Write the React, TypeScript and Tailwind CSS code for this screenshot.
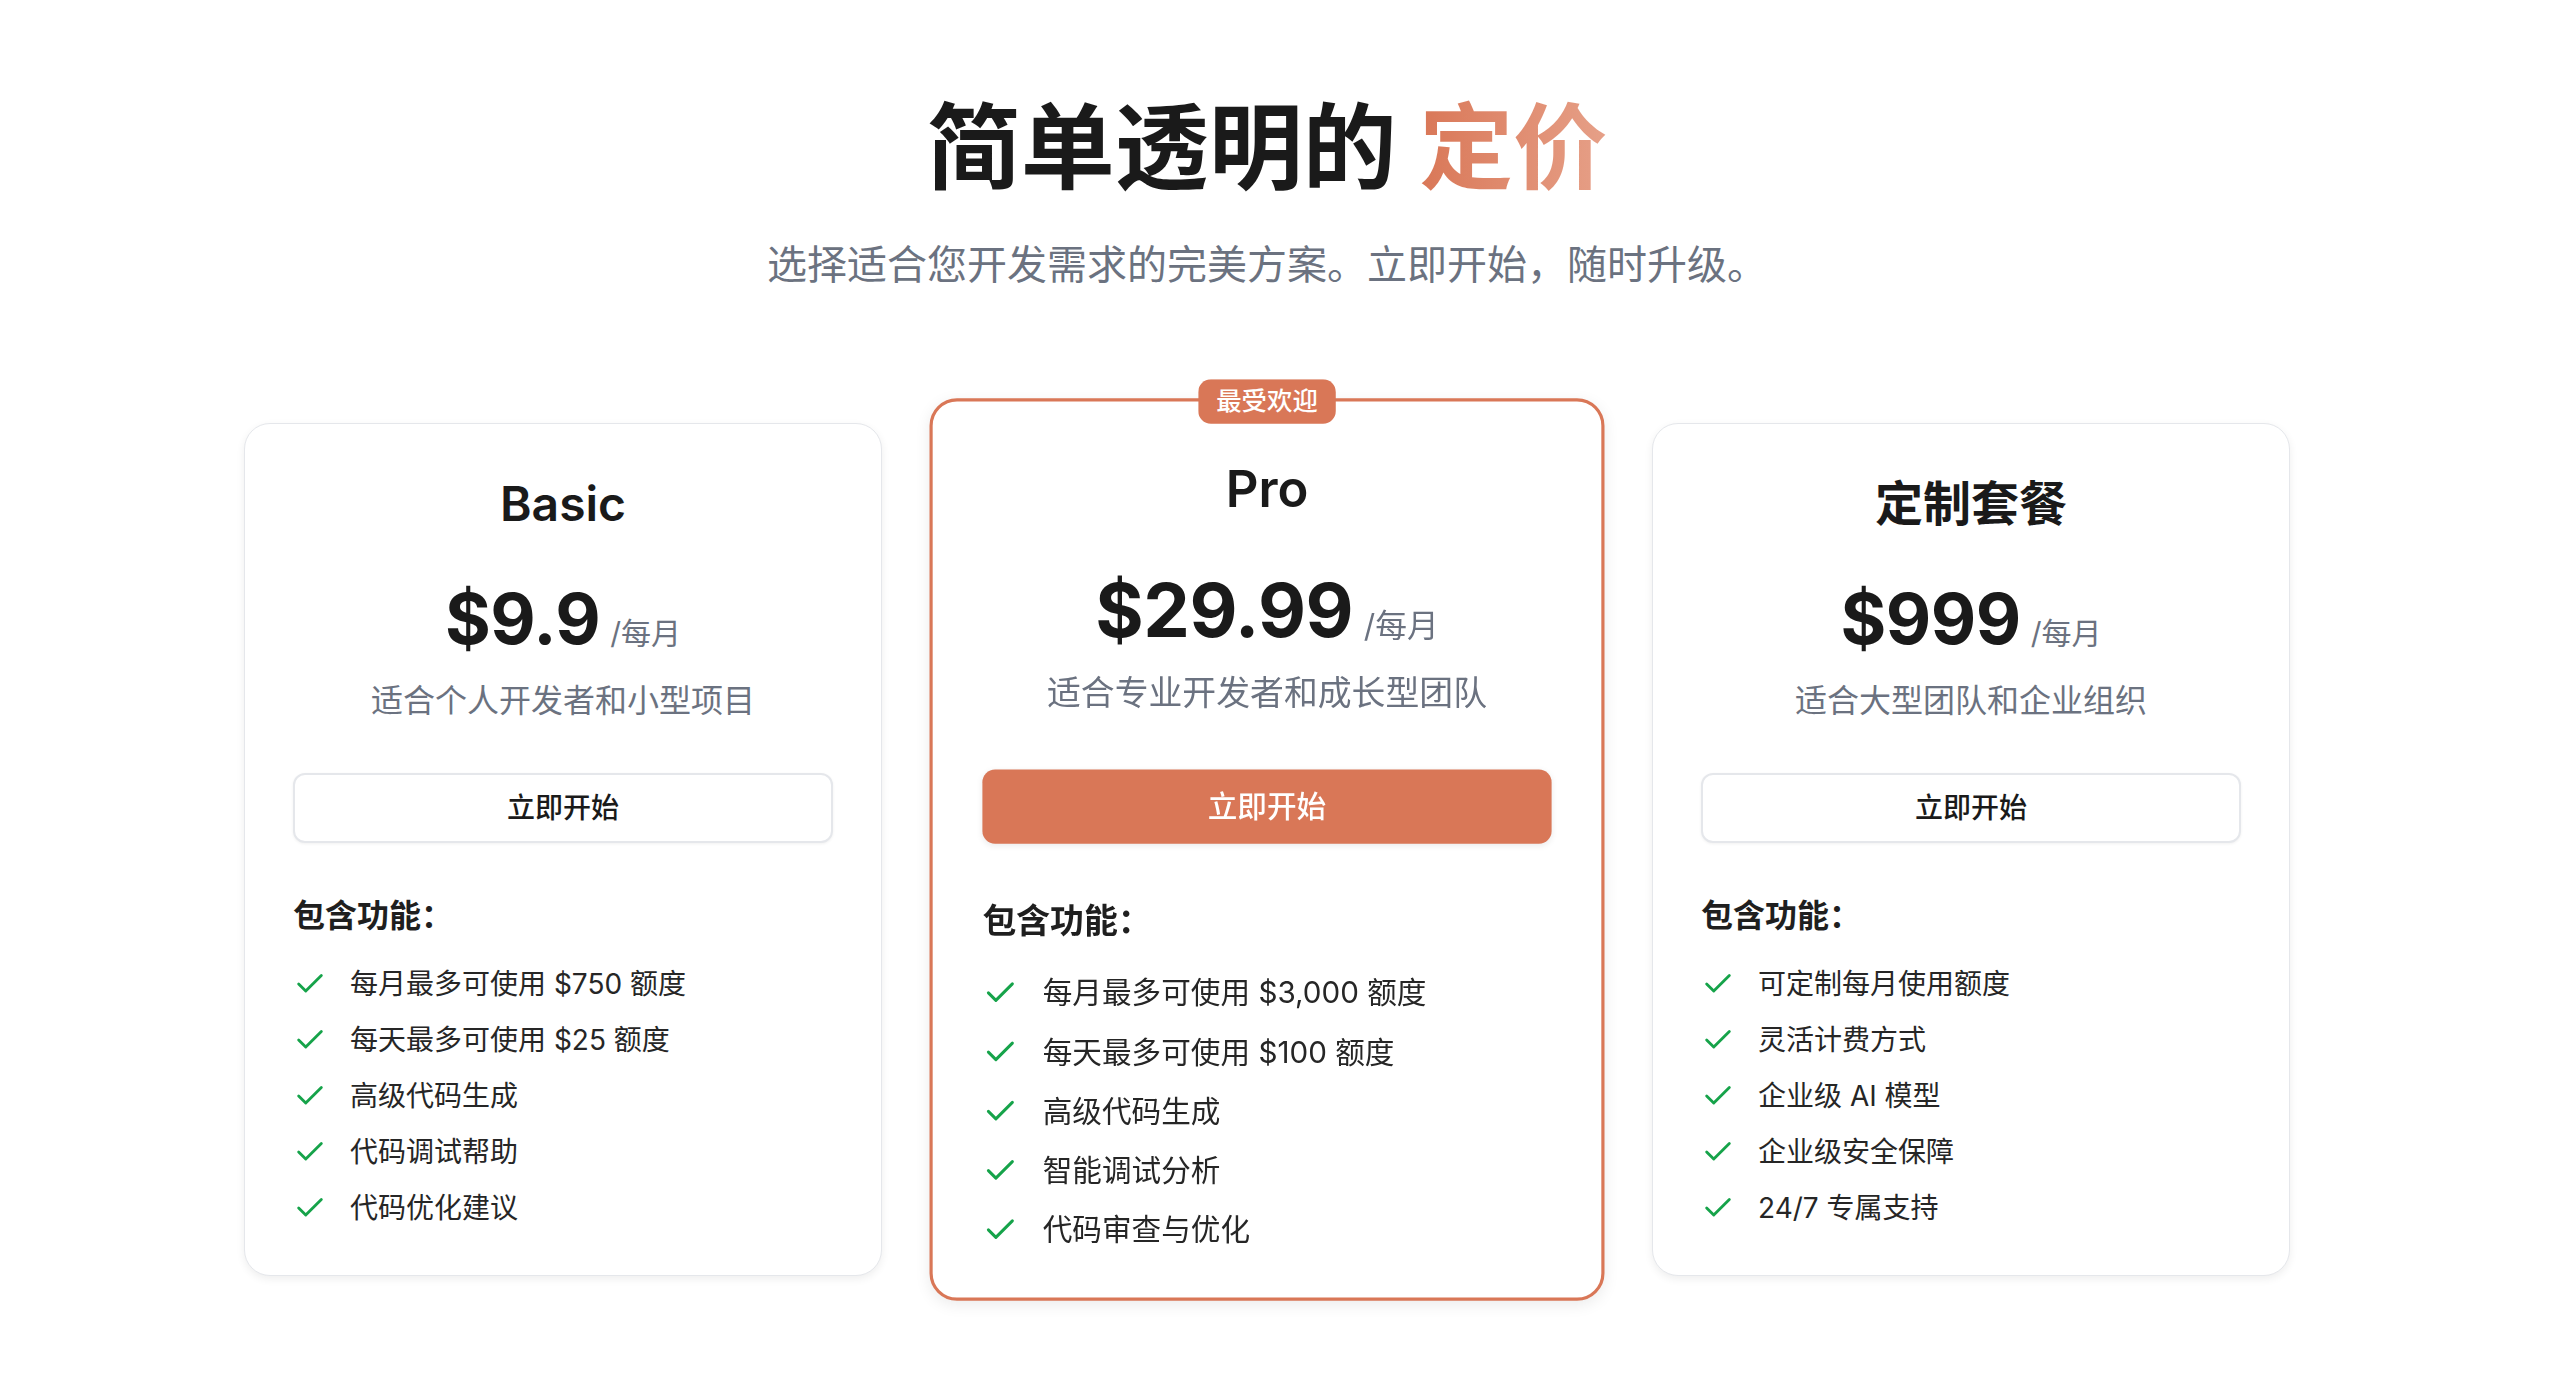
import React from "react";
import { Check } from "lucide-react";

type Plan = {
  name: string;
  price: string;
  desc: string;
  features: string[];
  popular?: boolean;
};

const plans: Plan[] = [
  {
    name: "Basic",
    price: "$9.9",
    desc: "适合个人开发者和小型项目",
    features: [
      "每月最多可使用 $750 额度",
      "每天最多可使用 $25 额度",
      "高级代码生成",
      "代码调试帮助",
      "代码优化建议",
    ],
  },
  {
    name: "Pro",
    price: "$29.99",
    desc: "适合专业开发者和成长型团队",
    features: [
      "每月最多可使用 $3,000 额度",
      "每天最多可使用 $100 额度",
      "高级代码生成",
      "智能调试分析",
      "代码审查与优化",
    ],
    popular: true,
  },
  {
    name: "定制套餐",
    price: "$999",
    desc: "适合大型团队和企业组织",
    features: [
      "可定制每月使用额度",
      "灵活计费方式",
      "企业级 AI 模型",
      "企业级安全保障",
      "24/7 专属支持",
    ],
  },
];

const PlanCard: React.FC<{ plan: Plan }> = ({ plan }) => {
  return (
    <div
      className={
        plan.popular
          ? "relative flex flex-col rounded-[26px] border-[3px] border-[#d97757] bg-white px-[47px] pt-[55px] pb-[36px] shadow-[0_4px_14px_rgba(0,0,0,0.08)] scale-[1.058]"
          : "relative flex flex-col rounded-[26px] border border-[#e5e7eb] bg-white px-[48px] pt-[52px] pb-[37px] shadow-[0_3px_8px_rgba(0,0,0,0.07)]"
      }
    >
      {plan.popular && (
        <div className="absolute -top-[21px] left-1/2 -translate-x-1/2 h-[42px] px-[17px] rounded-[12px] bg-[#d97757] text-white text-[24px] leading-[42px] font-medium whitespace-nowrap">
          最受欢迎
        </div>
      )}
      <h3 className="text-center text-[48px] leading-[56px] font-semibold text-[#1a1a1a]">
        {plan.name}
      </h3>
      <div className="mt-[52px] flex items-baseline justify-center">
        <span className="text-[70px] leading-[70px] font-bold text-[#1a1a1a] tracking-[-0.5px]">
          {plan.price}
        </span>
        <span className="ml-[10px] text-[30px] leading-[30px] text-[#6b7280]">/每月</span>
      </div>
      <p
        className={
          plan.popular
            ? "mt-[21px] text-center text-[32px] leading-[44px] text-[#6b7280]"
            : "mt-[25px] text-center text-[32px] leading-[44px] text-[#6b7280]"
        }
      >
        {plan.desc}
      </p>
      <button
        type="button"
        className={
          plan.popular
            ? "mt-[50px] h-[70px] w-full rounded-[12px] bg-[#d97757] text-white text-[28px] font-medium shadow-[0_2px_6px_rgba(0,0,0,0.08)]"
            : "mt-[50px] h-[70px] w-full rounded-[12px] border-2 border-[#e5e7eb] bg-white text-[#1a1a1a] text-[28px] font-medium shadow-[0_1px_3px_rgba(0,0,0,0.06)]"
        }
      >
        立即开始
      </button>
      <h4 className="mt-[51px] text-[32px] leading-[44px] font-semibold text-[#1f1f1f]">
        包含功能：
      </h4>
      <ul className="mt-[18px] flex flex-col">
        {plan.features.map((f) => (
          <li key={f} className="flex items-center h-[56px]">
            <Check size={34} strokeWidth={2} className="shrink-0 text-[#16a34a]" />
            <span className="ml-[23px] text-[28px] leading-[56px] text-[#262626]">{f}</span>
          </li>
        ))}
      </ul>
    </div>
  );
};

export default function App() {
  return (
    <div className="min-h-screen w-full bg-white font-[family-name:Inter,'Noto_Sans_CJK_SC',sans-serif]">
      <div className="w-[2534px] pt-[100px] pb-[80px]">
        <h1 className="text-center text-[94px] leading-[96px] font-bold text-[#1a1a1a]">
          简单透明的{" "}
          <span className="bg-gradient-to-r from-[#d97757] to-[#e6a088] bg-clip-text text-transparent">
            定价
          </span>
        </h1>
        <p className="mt-[41px] text-center text-[40px] leading-[56px] text-[#6b7280]">
          选择适合您开发需求的完美方案。立即开始，随时升级。
        </p>
        <div className="mx-auto mt-[130px] grid w-[2046px] grid-cols-3 gap-x-[66px]">
          {plans.map((p) => (
            <PlanCard key={p.name} plan={p} />
          ))}
        </div>
      </div>
    </div>
  );
}
